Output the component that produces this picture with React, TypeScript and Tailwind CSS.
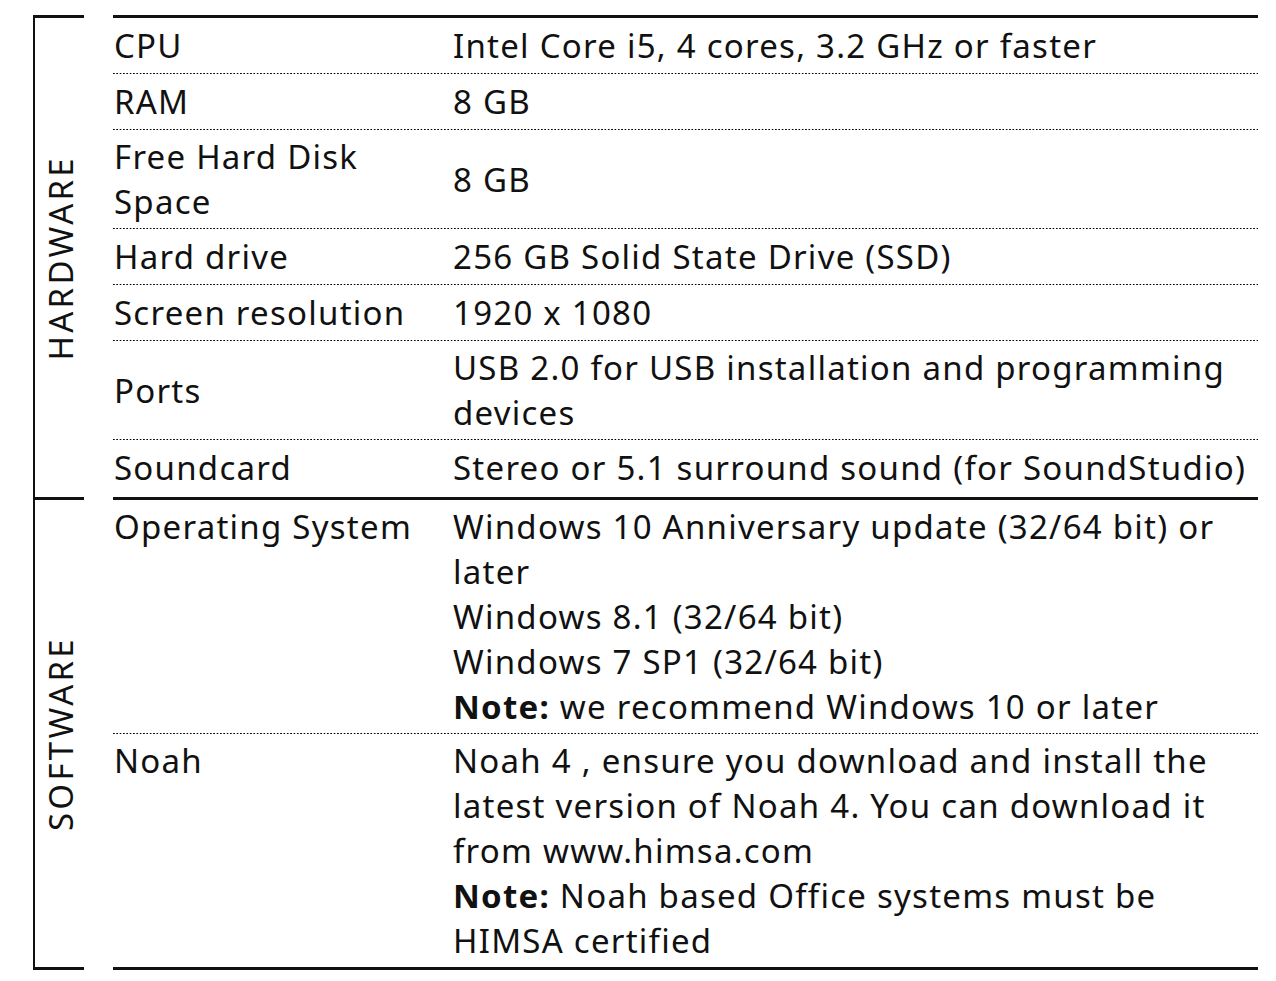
type Row = {
  label: string[];
  value: React.ReactNode[];
  tight?: boolean;
};

const hardware: Row[] = [
  { label: ["CPU"], value: ["Intel Core i5, 4 cores, 3.2 GHz or faster"] },
  { label: ["RAM"], value: ["8 GB"] },
  { label: ["Free Hard Disk", "Space"], value: ["8 GB"], tight: true },
  { label: ["Hard drive"], value: ["256 GB Solid State Drive (SSD)"] },
  { label: ["Screen resolution"], value: ["1920 x 1080"] },
  {
    label: ["Ports"],
    value: ["USB 2.0 for USB installation and programming", "devices"],
    tight: true,
  },
  { label: ["Soundcard"], value: ["Stereo or 5.1 surround sound (for SoundStudio)"] },
];

const software: Row[] = [
  {
    label: ["Operating System"],
    value: [
      "Windows 10 Anniversary update (32/64 bit) or",
      "later",
      "Windows 8.1 (32/64 bit)",
      "Windows 7 SP1 (32/64 bit)",
      <>
        <span className="font-bold">Note:</span> we recommend Windows 10 or later
      </>,
    ],
    tight: true,
  },
  {
    label: ["Noah"],
    value: [
      "Noah 4 , ensure you download and install the",
      "latest version of Noah 4. You can download it",
      "from www.himsa.com",
      <>
        <span className="font-bold">Note:</span> Noah based Office systems must be
      </>,
      "HIMSA certified",
    ],
    tight: true,
  },
];

function Dots() {
  return (
    <div className="h-[1px] w-full bg-[linear-gradient(to_right,#000_1.8px,transparent_1.8px)] bg-[length:3.35px_1px] bg-repeat-x" />
  );
}

function Section({
  title,
  rows,
  align,
  last,
}: {
  title: string;
  rows: Row[];
  align: "center" | "top";
  last?: boolean;
}) {
  return (
    <div className="flex">
      <div className="flex w-[80px] flex-col border-l-2 border-[#111]">
        <div className="h-[3px] w-[49px] bg-[#111]" />
        <div className="flex flex-1 items-center pl-[9px]">
          <div className="w-[33px] rotate-180 text-center leading-[33px] tracking-[3.3px] [writing-mode:vertical-rl]">
            {title}
          </div>
        </div>
        {last && <div className="h-[3px] w-[49px] bg-[#111]" />}
      </div>
      <div className="flex w-[1145px] flex-col">
        <div className="h-[3px] bg-[#111]" />
        {rows.map((r, i) => {
          const end = i === rows.length - 1;
          return (
            <div key={i}>
              <div
                className={`flex leading-[45px] ${align === "center" ? "items-center" : "items-start"} ${
                  r.tight ? "py-[4px]" : "py-[5px]"
                } ${end && !last ? "pb-[7px]" : ""}`}
              >
                <div className="w-[340px] shrink-0 pl-[1px]">
                  {r.label.map((l, j) => (
                    <div key={j} className="whitespace-nowrap">
                      {l}
                    </div>
                  ))}
                </div>
                <div className="flex-1">
                  {r.value.map((v, j) => (
                    <div key={j} className="whitespace-nowrap">
                      {v}
                    </div>
                  ))}
                </div>
              </div>
              {!end && <Dots />}
            </div>
          );
        })}
        {last && <div className="h-[3px] bg-[#111]" />}
      </div>
    </div>
  );
}

export default function App() {
  return (
    <div className="h-[981px] w-[1276px] bg-white pl-[33px] pt-[15px] font-['Noto_Sans',sans-serif] text-[33px] tracking-[1.25px] text-[#111]">
      <Section title="HARDWARE" rows={hardware} align="center" />
      <Section title="SOFTWARE" rows={software} align="top" last />
    </div>
  );
}
